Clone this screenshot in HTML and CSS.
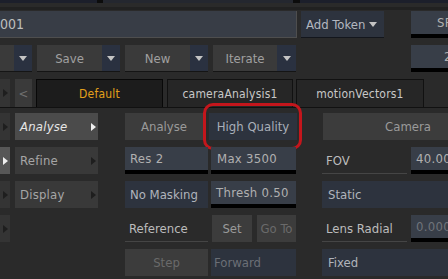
FILE: index.html
```html
<!DOCTYPE html>
<html lang="en">
<head>
  <meta charset="UTF-8" />
  <title>Analyse panel</title>
  <link rel="stylesheet" href="styles.css">
</head>
<body>
  <div class="screen">
    <!-- Reste der oberen Leiste -->
    <div class="strip"></div>
    <div class="band"></div>

    <!-- Name + Token -->
    <div class="row first">
      <div class="cell field w297">001</div>
      <div class="cell drop-btn ml4 w83">Add Token <span class="caret"></span></div>
      <div class="cell slider ml27 w85 pl26">SPF<i class="tick" style="left:0px"></i></div>
    </div>

    <!-- Save / New / Iterate -->
    <div class="row">
      <div class="split w32"><span class="main w14"></span><span class="drop w18"><span class="caret"></span></span></div>
      <div class="split ml5 w83"><span class="main w65">Save</span><span class="drop w18"><span class="caret"></span></span></div>
      <div class="split ml5 w83"><span class="main w65">New</span><span class="drop w18"><span class="caret"></span></span></div>
      <div class="split ml5 w83"><span class="main w64">Iterate</span><span class="drop w19"><span class="caret"></span></span></div>
      <div class="cell slider ml115 w85 pl33">24<i class="tick" style="left:23px"></i></div>
    </div>

    <!-- Tabs -->
    <div class="row tabs">
      <div class="cell mini"><span class="arrow dark"></span></div>
      <div class="cell back ml5 w17">&lt;</div>
      <div class="cell tab active ml4 w127">Default</div>
      <div class="cell tab ml4 w126">cameraAnalysis1</div>
      <div class="cell tab ml3 w128">motionVectors1</div>
    </div>

    <div class="row after-tabs">
      <div class="cell mini"><span class="arrow dark"></span></div>
      <div class="cell menu selected ml5 w83">Analyse<span class="arrow light"></span></div>
      <div class="cell btn ml27 w78">Analyse</div>
      <div class="hl ml6 w88"><div class="cell navy center full">High Quality</div></div>
      <div class="cell btn ml26 w170">Camera</div>
    </div>

    <div class="row">
      <div class="cell mini on"><span class="arrow light"></span></div>
      <div class="cell menu ml5 w83">Refine<span class="arrow dark"></span></div>
      <div class="cell slider ml27 w83 pl5">Res 2<i class="tick" style="left:1px"></i></div>
      <div class="cell slider ml3 w85 pl6">Max 3500<i class="tick" style="left:21px"></i></div>
      <div class="cell label ml26 w85">FOV</div>
      <div class="cell slider ml4 w85 pl5">40.00<i class="tick" style="left:18px"></i></div>
    </div>

    <div class="row">
      <div class="cell mini"><span class="arrow dark"></span></div>
      <div class="cell menu ml5 w83">Display<span class="arrow dark"></span></div>
      <div class="cell navy ml27 w83 pl5">No Masking</div>
      <div class="cell slider ml3 w85 pl5">Thresh 0.50<i class="tick" style="left:44px"></i></div>
      <div class="cell navy ml26 w170 pl6">Static</div>
    </div>

    <div class="row">
      <div class="cell mini"><span class="arrow dark"></span></div>
      <div class="cell label ml115 w83">Reference</div>
      <div class="cell btn ml4 w40">Set</div>
      <div class="cell btn dim ml5 w39">Go To</div>
      <div class="cell label ml26 w85">Lens Radial</div>
      <div class="cell slider ml4 w85 pl5 dimtext">0.000<i class="tick" style="left:0px"></i></div>
    </div>

    <div class="row">
      <div class="cell btn dim ml125 w83">Step</div>
      <div class="cell navy dim ml3 w85 pl3">Forward</div>
      <div class="cell navy ml26 w170 pl6">Fixed</div>
    </div>
  </div>
</body>
</html>
```

FILE: styles.css
```css
:root {
  --bg: #2a2a2a;
  --gray: #3c3c3c;
  --navy: #2d333e;
  --navy-light: #383e48;
  --text: #acacac;
  --dim: #6a6a6a;
}

html, body {
  margin: 0;
  padding: 0;
  background: var(--bg);
}
body {
  width: 448px;
  height: 279px;
  overflow: hidden;
  font-family: "DejaVu Sans", sans-serif;
  font-stretch: condensed;
  font-size: 13px;
  color: var(--text);
}

.screen {
  width: 448px;
  overflow: hidden;
}

/* obere Reste */
.strip {
  height: 3px;
  background: linear-gradient(to right, #1c1f2b 0 97px, #0c0c0c 97px 103px, #24272f 103px 293px, #0c0c0c 293px 300px, #1c1f2b 300px);
}
.band {
  margin-top: 4px;
  height: 3px;
  background: #212121;
}

/* Zeilen */
.row {
  display: flex;
  height: 27px;
  margin-top: 7px;
  white-space: nowrap;
}
.row.first { margin-top: 1px; }
.row.tabs {
  height: 28px;
  border-bottom: 1px solid #111;
  font-size: 12px;
  letter-spacing: 0.2px;
}
.row.after-tabs { margin-top: 5px; }

.cell {
  flex: none;
  display: flex;
  align-items: center;
  box-sizing: border-box;
  position: relative;
  overflow: hidden;
  height: 100%;
}
.center { justify-content: center; }
.full { width: 100%; }

/* Breiten und Abstaende */
.w14 { width: 14px; }
.w17 { width: 17px; }
.w18 { width: 18px; }
.w19 { width: 19px; }
.w32 { width: 32px; }
.w39 { width: 39px; }
.w40 { width: 40px; }
.w64 { width: 64px; }
.w65 { width: 65px; }
.w78 { width: 78px; }
.w83 { width: 83px; }
.w85 { width: 85px; }
.w88 { width: 88px; }
.w126 { width: 126px; }
.w127 { width: 127px; }
.w128 { width: 128px; }
.w170 { width: 170px; }
.w297 { width: 297px; }

.ml3 { margin-left: 3px; }
.ml4 { margin-left: 4px; }
.ml5 { margin-left: 5px; }
.ml6 { margin-left: 6px; }
.ml26 { margin-left: 26px; }
.ml27 { margin-left: 27px; }
.ml115 { margin-left: 115px; }
.ml125 { margin-left: 125px; }

.pl3 { padding-left: 3px; }
.pl5 { padding-left: 5px; }
.pl6 { padding-left: 6px; }
.pl26 { padding-left: 26px; }
.pl33 { padding-left: 33px; }

/* Textfeld oben */
.field {
  background: #383d46;
  border-right: 1px solid #4e4e4e;
  border-bottom: 1px solid #4e4e4e;
  color: #bdbdbd;
  font-size: 14px;
}

.drop-btn {
  background: var(--navy);
  border-bottom: 1px solid #13161c;
  padding-left: 5px;
  color: #b4b8c0;
  gap: 4px;
}

.caret {
  display: inline-block;
  width: 0;
  height: 0;
  border-left: 4px solid transparent;
  border-right: 4px solid transparent;
  border-top: 5px solid #c4c4c4;
}

/* Buttons mit Dropdown-Teil */
.split {
  flex: none;
  display: flex;
  height: 100%;
  border-bottom: 1px solid #151515;
  box-sizing: border-box;
}
.split .main {
  display: flex;
  align-items: center;
  justify-content: center;
  background: #3a3a3a;
  color: #a0a0a0;
}
.split .drop {
  display: flex;
  align-items: center;
  justify-content: center;
  background: #2a3140;
}

/* Slider-Felder */
.slider {
  background: var(--navy-light);
  border-bottom: 4px solid #000;
  color: #b0b0b0;
  letter-spacing: 0.3px;
}
.slider .tick {
  position: absolute;
  bottom: -4px;
  width: 3px;
  height: 4px;
  background: #8a8a8a;
}
.dimtext { color: #6f737a; }

/* Tabs */
.mini {
  width: 10px;
  background: #343434;
  justify-content: center;
}
.mini.on { background: #575757; }
.back {
  background: #3a3a3a;
  color: #707070;
  justify-content: center;
  font-size: 13px;
}
.tab {
  background: #262626;
  border: 1px solid #111;
  border-bottom: none;
  justify-content: center;
  color: #c8c8c8;
}
.tab.active {
  background: #1c1c1c;
  border-color: #080808;
  color: #e3a01b;
}

/* Menue links */
.menu {
  background: #393939;
  padding-left: 5px;
  padding-right: 2px;
  justify-content: space-between;
  color: #a6a6a6;
  letter-spacing: 0.2px;
}
.menu.selected {
  background: #4b4b4b;
  color: #e6e6e6;
  font-style: italic;
}

.arrow {
  display: inline-block;
  width: 0;
  height: 0;
  border-top: 4px solid transparent;
  border-bottom: 4px solid transparent;
  border-left: 5px solid #1e1e1e;
}
.arrow.light { border-left-color: #f0f0f0; }

/* normale Buttons */
.btn {
  background: var(--gray);
  justify-content: center;
  color: #9a9a9a;
}
.btn.dim { color: var(--dim); }

.navy {
  background: var(--navy);
  color: #b0b4bc;
}
.navy.dim { color: #6b6f76; }

.label {
  border-bottom: 1px solid #454545;
  padding-left: 4px;
  color: #bcbcbc;
}

/* rote Markierung */
.hl {
  flex: none;
  height: 100%;
  position: relative;
}
.hl .navy { color: #a9afb9; }
.hl::after {
  content: "";
  position: absolute;
  left: -6px;
  right: -5px;
  top: -10px;
  bottom: -10px;
  border: 3px solid #c4161c;
  border-radius: 10px;
}
```
